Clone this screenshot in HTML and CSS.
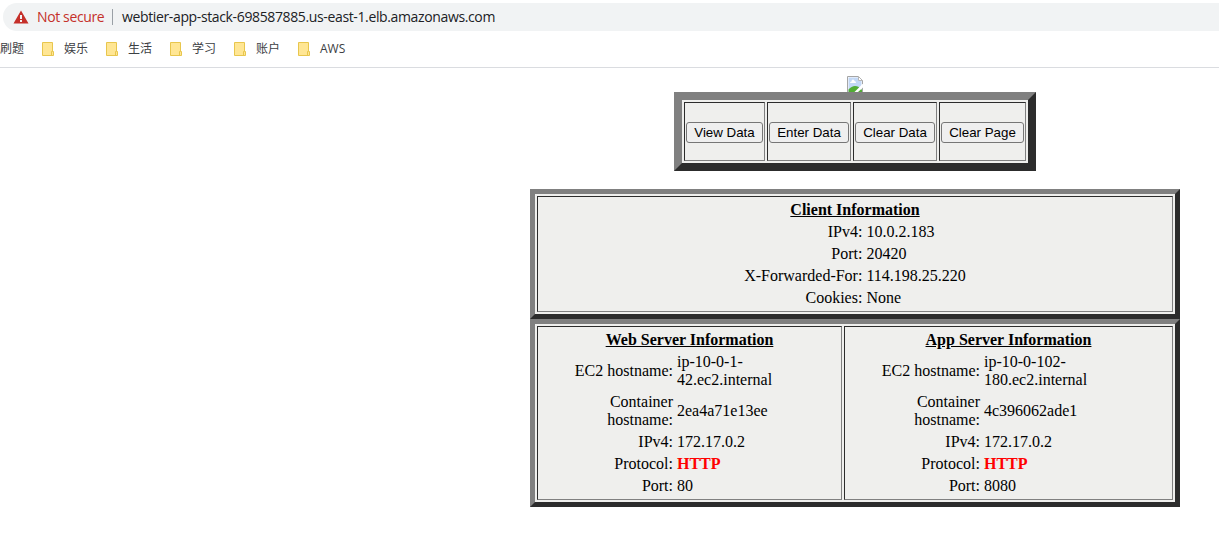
FILE: index.html
```html
<!DOCTYPE html>
<html lang="en">
<head>
<meta charset="utf-8">
<title>webtier-app-stack</title>
<link rel="stylesheet" href="styles.css">
</head>
<body>
<header class="chrome">
  <div class="address">
    <svg class="warning" width="16" height="14" viewBox="0 0 16 14"><path fill="#c5302a" fill-rule="evenodd" d="M8 .5 15.500 13.500H.5ZM7 5v4h2v-4ZM7 10v2h2v-2Z"/></svg>
    <span class="insecure">Not secure</span>
    <span class="divider"></span>
    <span class="url">webtier-app-stack-698587885.us-east-1.elb.amazonaws.com</span>
  </div>
  <nav class="bookmarks">
    <span class="bookmark">刷题</span>
    <span class="bookmark"><svg class="folder" width="12" height="14" viewBox="0 0 12 14"><path d="M.5.5h10v9h1v4H.5Z" fill="#ffe694" stroke="#e8c64d"/><path d="M9.5 13V9.5h1" fill="none" stroke="#e8c64d"/></svg>娱乐</span>
    <span class="bookmark"><svg class="folder" width="12" height="14" viewBox="0 0 12 14"><path d="M.5.5h10v9h1v4H.5Z" fill="#ffe694" stroke="#e8c64d"/><path d="M9.5 13V9.5h1" fill="none" stroke="#e8c64d"/></svg>生活</span>
    <span class="bookmark"><svg class="folder" width="12" height="14" viewBox="0 0 12 14"><path d="M.5.5h10v9h1v4H.5Z" fill="#ffe694" stroke="#e8c64d"/><path d="M9.5 13V9.5h1" fill="none" stroke="#e8c64d"/></svg>学习</span>
    <span class="bookmark"><svg class="folder" width="12" height="14" viewBox="0 0 12 14"><path d="M.5.5h10v9h1v4H.5Z" fill="#ffe694" stroke="#e8c64d"/><path d="M9.5 13V9.5h1" fill="none" stroke="#e8c64d"/></svg>账户</span>
    <span class="bookmark"><svg class="folder" width="12" height="14" viewBox="0 0 12 14"><path d="M.5.5h10v9h1v4H.5Z" fill="#ffe694" stroke="#e8c64d"/><path d="M9.5 13V9.5h1" fill="none" stroke="#e8c64d"/></svg>AWS</span>
  </nav>
</header>
<main class="page">
  <svg class="broken" width="16" height="16" viewBox="0 0 16 16">
    <path d="M.5 16V.5h10.500l4.500 4.500V16" fill="#fff" stroke="#a5a5a5"/>
    <path d="M1.500 1.500h9.500v3.500h3.500V16h-13Z" fill="#c3d8f6"/>
    <path d="M3 7q0-1.500 1.500-1.500Q4.500 3.500 6 3.500 7.500 3.500 7.500 5 9 5 9 7Z" fill="#fff"/>
    <path d="M1.500 16v-2.500q3-3.500 6.500-3.500 4 0 7 4v2Z" fill="#52ad35"/>
    <path d="M16.500 7 7.500 16H11l5.500-5Z" fill="#fff"/>
    <path d="M11.500.5v4h4Z" fill="#fff" stroke="#a5a5a5" stroke-width=".8"/>
  </svg>
  <div class="panel actions">
    <div class="cell"><button class="action">View Data</button></div>
    <div class="cell"><button class="action">Enter Data</button></div>
    <div class="cell"><button class="action">Clear Data</button></div>
    <div class="cell"><button class="action">Clear Page</button></div>
  </div>
  <div class="panel client">
    <section class="cell info">
      <h2 class="title">Client Information</h2>
      <span class="label">IPv4:</span><span>10.0.2.183</span>
      <span class="label">Port:</span><span>20420</span>
      <span class="label">X-Forwarded-For:</span><span>114.198.25.220</span>
      <span class="label">Cookies:</span><span>None</span>
    </section>
  </div>
  <div class="panel servers">
    <section class="cell info">
      <h2 class="title">Web Server Information</h2>
      <span class="label">EC2 hostname:</span><span>ip-10-0-1-<br>42.ec2.internal</span>
      <span class="label">Container<br>hostname:</span><span>2ea4a71e13ee</span>
      <span class="label">IPv4:</span><span>172.17.0.2</span>
      <span class="label">Protocol:</span><span class="protocol">HTTP</span>
      <span class="label">Port:</span><span>80</span>
    </section>
    <section class="cell info">
      <h2 class="title">App Server Information</h2>
      <span class="label">EC2 hostname:</span><span>ip-10-0-102-<br>180.ec2.internal</span>
      <span class="label">Container<br>hostname:</span><span>4c396062ade1</span>
      <span class="label">IPv4:</span><span>172.17.0.2</span>
      <span class="label">Protocol:</span><span class="protocol">HTTP</span>
      <span class="label">Port:</span><span>8080</span>
    </section>
  </div>
</main>
</body>
</html>
```
FILE: styles.css
```css
* { box-sizing: border-box; }
body { margin: 0; background: #fff; overflow: hidden; font: 16px/18px "Liberation Serif", "Times New Roman", serif; color: #000; }

.chrome { height: 68px; padding-top: 3px; border-bottom: 1px solid #dadce0; font-family: "Open Sans", "Noto Sans CJK SC", sans-serif; }
.address { display: flex; align-items: center; height: 28px; margin-left: 3px; padding-left: 10px; border-radius: 14px 0 0 14px; background: #f1f3f4; font-size: 14px; white-space: nowrap; }
.insecure { width: 67px; margin-left: 8px; color: #c5302a; letter-spacing: -0.37px; }
.divider { width: 1px; height: 16px; margin: 0 9px 0 8px; background: #9aa0a6; }
.url { color: #202124; letter-spacing: -0.365px; }
.bookmarks { display: flex; height: 36px; align-items: center; font-size: 12px; color: #3c4043; }
.bookmark { display: flex; align-items: center; width: 64px; white-space: nowrap; }
.bookmark:first-child { width: 42px; }
.folder { margin-right: 10px; }

.page { display: flex; flex-direction: column; align-items: center; width: 650px; margin-left: 530px; padding-top: 8px; }
.broken { display: block; }
.panel { display: grid; gap: 2px; padding: 2px; background: #efefed; border-style: solid; border-color: #808080 #2c2c2c #2c2c2c #808080; }
.cell { border: 1px solid; border-color: #2c2c2c #808080 #808080 #2c2c2c; padding: 1px; }
.actions { width: 362px; height: 79px; grid-template-columns: 81px 84px 84px 87px; border-width: 8px; margin-bottom: 18px; }
.actions .cell { display: flex; align-items: center; padding-top: 2px; }
.action { width: 100%; height: 21px; padding: 0; border: 1px solid #767676; border-radius: 3px; background: #efefef; color: #000; font: 13.333px "Liberation Sans", Arial, sans-serif; white-space: nowrap; }
.client, .servers { width: 650px; border-width: 5px; }
.client { height: 130px; }
.servers { height: 188px; grid-template-columns: 305px 329px; }
.info { display: grid; grid-template-columns: 134px 1fr; gap: 4px; align-content: start; align-items: center; padding-top: 4px; }
.client .info { grid-template-columns: 323.4px 1fr; }
.title { grid-column: 1 / -1; margin: 0; font-size: 16px; font-weight: bold; text-align: center; text-decoration: underline; }
.label { text-align: right; }
.protocol { color: #f00; font-weight: bold; }
```
